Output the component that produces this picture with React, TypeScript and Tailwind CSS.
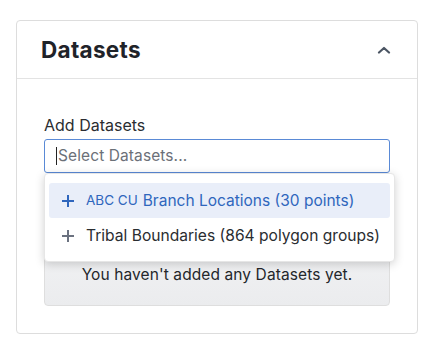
import React from 'react';

const font = { fontFamily: 'Inter, "Noto Sans", sans-serif' };

const PlusIcon = ({ className }: { className: string }) => (
  <svg width="14" height="14" viewBox="0 0 14 14" className={className}>
    <path d="M7 1v12M1 7h12" stroke="currentColor" strokeWidth="2" strokeLinecap="butt" />
  </svg>
);

const App: React.FC = () => {
  return (
    <div className="w-[429px] h-[354px] bg-white pt-[20px] pl-[16px] pr-[11px]" style={font}>
      <div className="h-[314px] border border-[#dddddd] rounded-[4px]">
        <div className="h-[58px] flex items-center justify-between pl-[24px] pr-[26px] border-b border-[#e3e3e3]">
          <h2 className="text-[22.5px] font-bold text-[#1f2329] tracking-[0.3px]">Datasets</h2>
          <svg width="14" height="8" viewBox="0 0 14 8">
            <path d="M2 6.5L7 2l5 4.5" fill="none" stroke="#4b5563" strokeWidth="2.2" strokeLinecap="round" strokeLinejoin="round" />
          </svg>
        </div>

        <div className="px-[27px] pt-[36px]">
          <label className="block text-[16px] leading-[20px] text-[#2a2d31] mb-[4px]">Add Datasets</label>
          <div className="relative">
            <div className="h-[34px] border-[1.5px] border-[#5a8ad6] rounded-[3px] flex items-center pl-[11px] text-[15.5px] text-[#6b7078] tracking-[0.1px]">
              <span className="w-[1px] h-[18px] bg-[#222] mr-[1px]" />
              Select Datasets...
            </div>

            <div className="absolute top-full left-0 w-[351px] bg-white rounded-[4px] shadow-[0_2px_10px_rgba(0,0,0,0.18)] border border-[#e6e6e6] pt-[9px] pb-[8px] px-[4px] z-10 whitespace-nowrap">
              <div className="h-[35px] flex items-center bg-[#e9eef9] rounded-[3px] pl-[12px] text-[#2f66bd]">
                <PlusIcon className="mr-[11px]" />
                <span className="text-[13.5px] mr-[5px]">ABC CU</span>
                <span className="text-[15.5px]">Branch Locations (30 points)</span>
              </div>
              <div className="h-[35px] flex items-center pl-[12px] text-[#2a2d31]">
                <PlusIcon className="mr-[11px] text-[#6b7280]" />
                <span className="text-[15.6px]">Tribal Boundaries (864 polygon groups)</span>
              </div>
            </div>
          </div>

          <div className="mt-[14px] h-[119px] border border-[#dedede] rounded-[4px] bg-gradient-to-b from-[#f7f7f8] to-[#ebecee] flex items-end justify-center pb-[20px]">
            <p className="text-[15.5px] leading-[20px] text-[#24272b] tracking-[0.1px]">You haven't added any Datasets yet.</p>
          </div>
        </div>
      </div>
    </div>
  );
};

export default App;
